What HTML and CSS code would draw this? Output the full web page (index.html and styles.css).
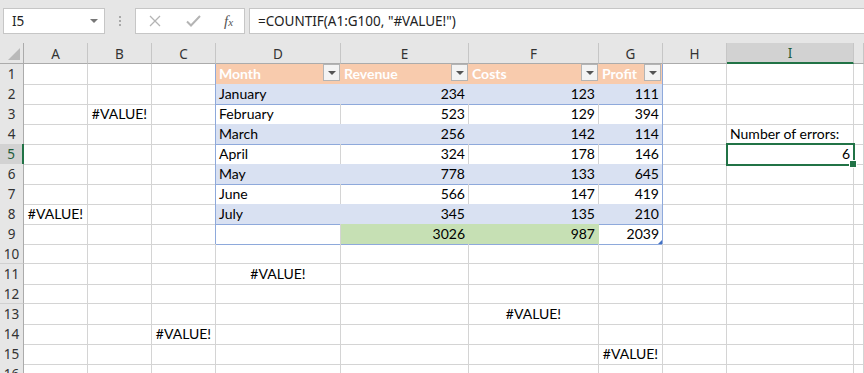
FILE: index.html
```html
<!DOCTYPE html>
<html lang="en">
<head>
    <meta charset="UTF-8">
    <title>Book1 - Excel</title>
    <link rel="stylesheet" href="styles.css">
</head>
<body>
    <!-- Formula bar -->
    <div class="toolbar">
        <div class="namebox">
            <span>I5</span>
            <span class="caret"></span>
        </div>
        <div class="grip"><i></i><i></i><i></i></div>
        <div class="fx-box">
            <svg width="12" height="12" viewBox="0 0 12 12" class="ico"><path d="M1 1L11 11M11 1L1 11" stroke="#b4b4b4" stroke-width="1.3" fill="none"/></svg>
            <svg width="15" height="12" viewBox="0 0 15 12" class="ico"><path d="M1 6.5L5 10.5L14 1" stroke="#b4b4b4" stroke-width="2" fill="none"/></svg>
            <span class="fx">f<sub>x</sub></span>
        </div>
        <div class="formula">=COUNTIF(A1:G100, "#VALUE!")</div>
    </div>

    <!-- Sheet grid -->
    <div class="sheet">
        <div class="row head">
            <div class="corner"><span></span></div>
            <div class="ch">A</div><div class="ch">B</div><div class="ch">C</div><div class="ch">D</div>
            <div class="ch">E</div><div class="ch">F</div><div class="ch">G</div><div class="ch">H</div>
            <div class="ch sel">I</div><div class="ch"></div>
        </div>

        <div class="row">
            <div class="rh">1</div>
            <div class="c"></div><div class="c"></div><div class="c edge"></div>
            <div class="c th">Month<span class="filter"></span></div>
            <div class="c th">Revenue<span class="filter"></span></div>
            <div class="c th">Costs<span class="filter"></span></div>
            <div class="c th edge">Profit<span class="filter"></span></div>
            <div class="c"></div><div class="c"></div><div class="c"></div>
        </div>

        <div class="row">
            <div class="rh">2</div>
            <div class="c"></div><div class="c"></div><div class="c edge"></div>
            <div class="c band">January</div>
            <div class="c band num">234</div>
            <div class="c band num">123</div>
            <div class="c band num edge">111</div>
            <div class="c"></div><div class="c"></div><div class="c"></div>
        </div>

        <div class="row">
            <div class="rh">3</div>
            <div class="c"></div><div class="c err">#VALUE!</div><div class="c edge"></div>
            <div class="c plain">February</div>
            <div class="c plain num">523</div>
            <div class="c plain num">129</div>
            <div class="c plain num edge">394</div>
            <div class="c"></div><div class="c"></div><div class="c"></div>
        </div>

        <div class="row">
            <div class="rh">4</div>
            <div class="c"></div><div class="c"></div><div class="c edge"></div>
            <div class="c band">March</div>
            <div class="c band num">256</div>
            <div class="c band num">142</div>
            <div class="c band num edge">114</div>
            <div class="c"></div><div class="c label">Number of errors:</div><div class="c"></div>
        </div>

        <div class="row">
            <div class="rh sel">5</div>
            <div class="c"></div><div class="c"></div><div class="c edge"></div>
            <div class="c plain">April</div>
            <div class="c plain num">324</div>
            <div class="c plain num">178</div>
            <div class="c plain num edge">146</div>
            <div class="c"></div><div class="c num active">6</div><div class="c"></div>
        </div>

        <div class="row">
            <div class="rh">6</div>
            <div class="c"></div><div class="c"></div><div class="c edge"></div>
            <div class="c band">May</div>
            <div class="c band num">778</div>
            <div class="c band num">133</div>
            <div class="c band num edge">645</div>
            <div class="c"></div><div class="c"></div><div class="c"></div>
        </div>

        <div class="row">
            <div class="rh">7</div>
            <div class="c"></div><div class="c"></div><div class="c edge"></div>
            <div class="c plain">June</div>
            <div class="c plain num">566</div>
            <div class="c plain num">147</div>
            <div class="c plain num edge">419</div>
            <div class="c"></div><div class="c"></div><div class="c"></div>
        </div>

        <div class="row">
            <div class="rh">8</div>
            <div class="c err">#VALUE!</div><div class="c"></div><div class="c edge"></div>
            <div class="c band">July</div>
            <div class="c band num">345</div>
            <div class="c band num">135</div>
            <div class="c band num edge">210</div>
            <div class="c"></div><div class="c"></div><div class="c"></div>
        </div>

        <div class="row">
            <div class="rh">9</div>
            <div class="c"></div><div class="c"></div><div class="c edge"></div>
            <div class="c plain green-next"></div>
            <div class="c total num">3026</div>
            <div class="c total num">987</div>
            <div class="c plain num edge last">2039</div>
            <div class="c"></div><div class="c"></div><div class="c"></div>
        </div>

        <div class="row">
            <div class="rh">10</div>
            <div class="c"></div><div class="c"></div><div class="c"></div><div class="c"></div>
            <div class="c"></div><div class="c"></div><div class="c"></div><div class="c"></div>
            <div class="c"></div><div class="c"></div>
        </div>

        <div class="row">
            <div class="rh">11</div>
            <div class="c"></div><div class="c"></div><div class="c"></div>
            <div class="c err">#VALUE!</div>
            <div class="c"></div><div class="c"></div><div class="c"></div><div class="c"></div>
            <div class="c"></div><div class="c"></div>
        </div>

        <div class="row">
            <div class="rh">12</div>
            <div class="c"></div><div class="c"></div><div class="c"></div><div class="c"></div>
            <div class="c"></div><div class="c"></div><div class="c"></div><div class="c"></div>
            <div class="c"></div><div class="c"></div>
        </div>

        <div class="row">
            <div class="rh">13</div>
            <div class="c"></div><div class="c"></div><div class="c"></div><div class="c"></div>
            <div class="c"></div><div class="c err">#VALUE!</div><div class="c"></div><div class="c"></div>
            <div class="c"></div><div class="c"></div>
        </div>

        <div class="row">
            <div class="rh">14</div>
            <div class="c"></div><div class="c"></div><div class="c err">#VALUE!</div><div class="c"></div>
            <div class="c"></div><div class="c"></div><div class="c"></div><div class="c"></div>
            <div class="c"></div><div class="c"></div>
        </div>

        <div class="row">
            <div class="rh">15</div>
            <div class="c"></div><div class="c"></div><div class="c"></div><div class="c"></div>
            <div class="c"></div><div class="c"></div><div class="c err">#VALUE!</div><div class="c"></div>
            <div class="c"></div><div class="c"></div>
        </div>

        <div class="row">
            <div class="rh">16</div>
            <div class="c"></div><div class="c"></div><div class="c"></div><div class="c"></div>
            <div class="c"></div><div class="c"></div><div class="c"></div><div class="c"></div>
            <div class="c"></div><div class="c"></div>
        </div>
    </div>
</body>
</html>
```

FILE: styles.css
```css
/* Global */
* {
    margin: 0;
    padding: 0;
    box-sizing: border-box;
}

body {
    background: #ffffff;
    overflow: hidden;
    font-family: 'Lato', 'Liberation Sans', sans-serif;
}

/* Formula bar */
.toolbar {
    height: 43px;
    background: #e6e6e6;
    display: flex;
    align-items: flex-start;
    padding-top: 8px;
    padding-left: 3px;
    font-family: 'Noto Sans', sans-serif;
    font-size: 13.5px;
    color: #222;
}

.namebox {
    width: 102px;
    height: 26px;
    background: #fff;
    border: 1px solid #c6c6c6;
    display: flex;
    align-items: center;
    justify-content: space-between;
    padding: 0 6px 0 8px;
}

.caret {
    width: 0;
    height: 0;
    border-left: 4px solid transparent;
    border-right: 4px solid transparent;
    border-top: 4px solid #777;
}

.grip {
    width: 30px;
    height: 26px;
    display: flex;
    flex-direction: column;
    align-items: center;
    justify-content: center;
    gap: 2px;
}

.grip i {
    width: 2px;
    height: 2px;
    background: #a8a8a8;
}

.fx-box {
    width: 110px;
    height: 26px;
    background: #fff;
    border: 1px solid #c6c6c6;
    display: flex;
    align-items: center;
    padding-left: 13px;
    gap: 25px;
}

.fx {
    font-family: 'Liberation Serif', serif;
    font-style: italic;
    font-size: 15px;
    color: #555;
    margin-left: -2px;
}

.fx sub {
    font-size: 11px;
    vertical-align: 0;
}

.formula {
    flex: 1;
    height: 26px;
    margin-left: 4px;
    background: #fff;
    border: 1px solid #c6c6c6;
    border-right: none;
    padding-left: 8px;
    line-height: 24px;
}

/* Sheet */
.row {
    display: grid;
    grid-template-columns: 24px 64px 64px 64px 125px 128px 130px 64px 64px 127px 1fr;
    height: 20px;
}

.row.head {
    height: 21px;
}

.corner, .ch, .rh {
    background: #e6e6e6;
    font-family: 'Noto Sans', sans-serif;
    font-size: 13.5px;
    color: #333;
    display: flex;
    align-items: center;
    justify-content: center;
}

.corner {
    border-right: 1px solid #ababab;
    border-bottom: 1px solid #ababab;
    position: relative;
}

.corner span {
    position: absolute;
    right: 3px;
    bottom: 3px;
    width: 0;
    height: 0;
    border-left: 12px solid transparent;
    border-bottom: 12px solid #b9b9b9;
}

.ch {
    border-right: 1px solid #c6c6c6;
    border-bottom: 1px solid #ababab;
    padding-top: 1px;
}

.ch.sel {
    background: #d2d2d2;
    color: #1f5c3a;
    border-bottom: 2px solid #217346;
}

.rh {
    border-right: 1px solid #ababab;
    border-bottom: 1px solid #d0d0d0;
}

.rh.sel {
    background: #d2d2d2;
    color: #1f5c3a;
    border-right: 2px solid #217346;
}

/* Cells */
.c {
    border-right: 1px solid #d4d4d4;
    border-bottom: 1px solid #d4d4d4;
    font-size: 14px;
    line-height: 20px;
    color: #000;
    padding: 0 3px;
    white-space: nowrap;
    position: relative;
}

.num {
    text-align: right;
}

.err {
    text-align: center;
    overflow: visible;
}

.label {
    overflow: visible;
}

/* Table */
.c.edge {
    border-right-color: #8ea9db;
}

.th {
    background: #f8cbad;
    color: #fff;
    font-weight: bold;
    border-right-color: #f8cbad;
    border-bottom-color: #8ea9db;
}

.band {
    background: #d9e1f2;
    border-right-color: #d9e1f2;
    border-bottom-color: #8ea9db;
}

.plain {
    border-bottom-color: #8ea9db;
}

.total {
    background: #c6e0b4;
    border-right-color: #c6e0b4;
    border-bottom-color: #8ea9db;
}

.green-next {
    border-right-color: #d4d4d4;
}

.filter {
    position: absolute;
    right: 0;
    top: 0;
    width: 17px;
    height: 17px;
    background: #f3f3f3;
    border: 1px solid #b4b4b4;
}

.filter::after {
    content: "";
    position: absolute;
    left: 4px;
    top: 6px;
    border-left: 4px solid transparent;
    border-right: 4px solid transparent;
    border-top: 4px solid #555;
}

.th.edge .filter {
    right: 1px;
}

.last::after {
    content: "";
    position: absolute;
    right: 0;
    bottom: 0;
    border-left: 4px solid transparent;
    border-bottom: 4px solid #4472c4;
}

/* Active cell */
.active {
    outline: 2px solid #217346;
    outline-offset: -1px;
    z-index: 1;
}

.active::after {
    content: "";
    position: absolute;
    right: -4px;
    bottom: -4px;
    width: 6px;
    height: 6px;
    background: #217346;
    border: 1px solid #fff;
}
```
